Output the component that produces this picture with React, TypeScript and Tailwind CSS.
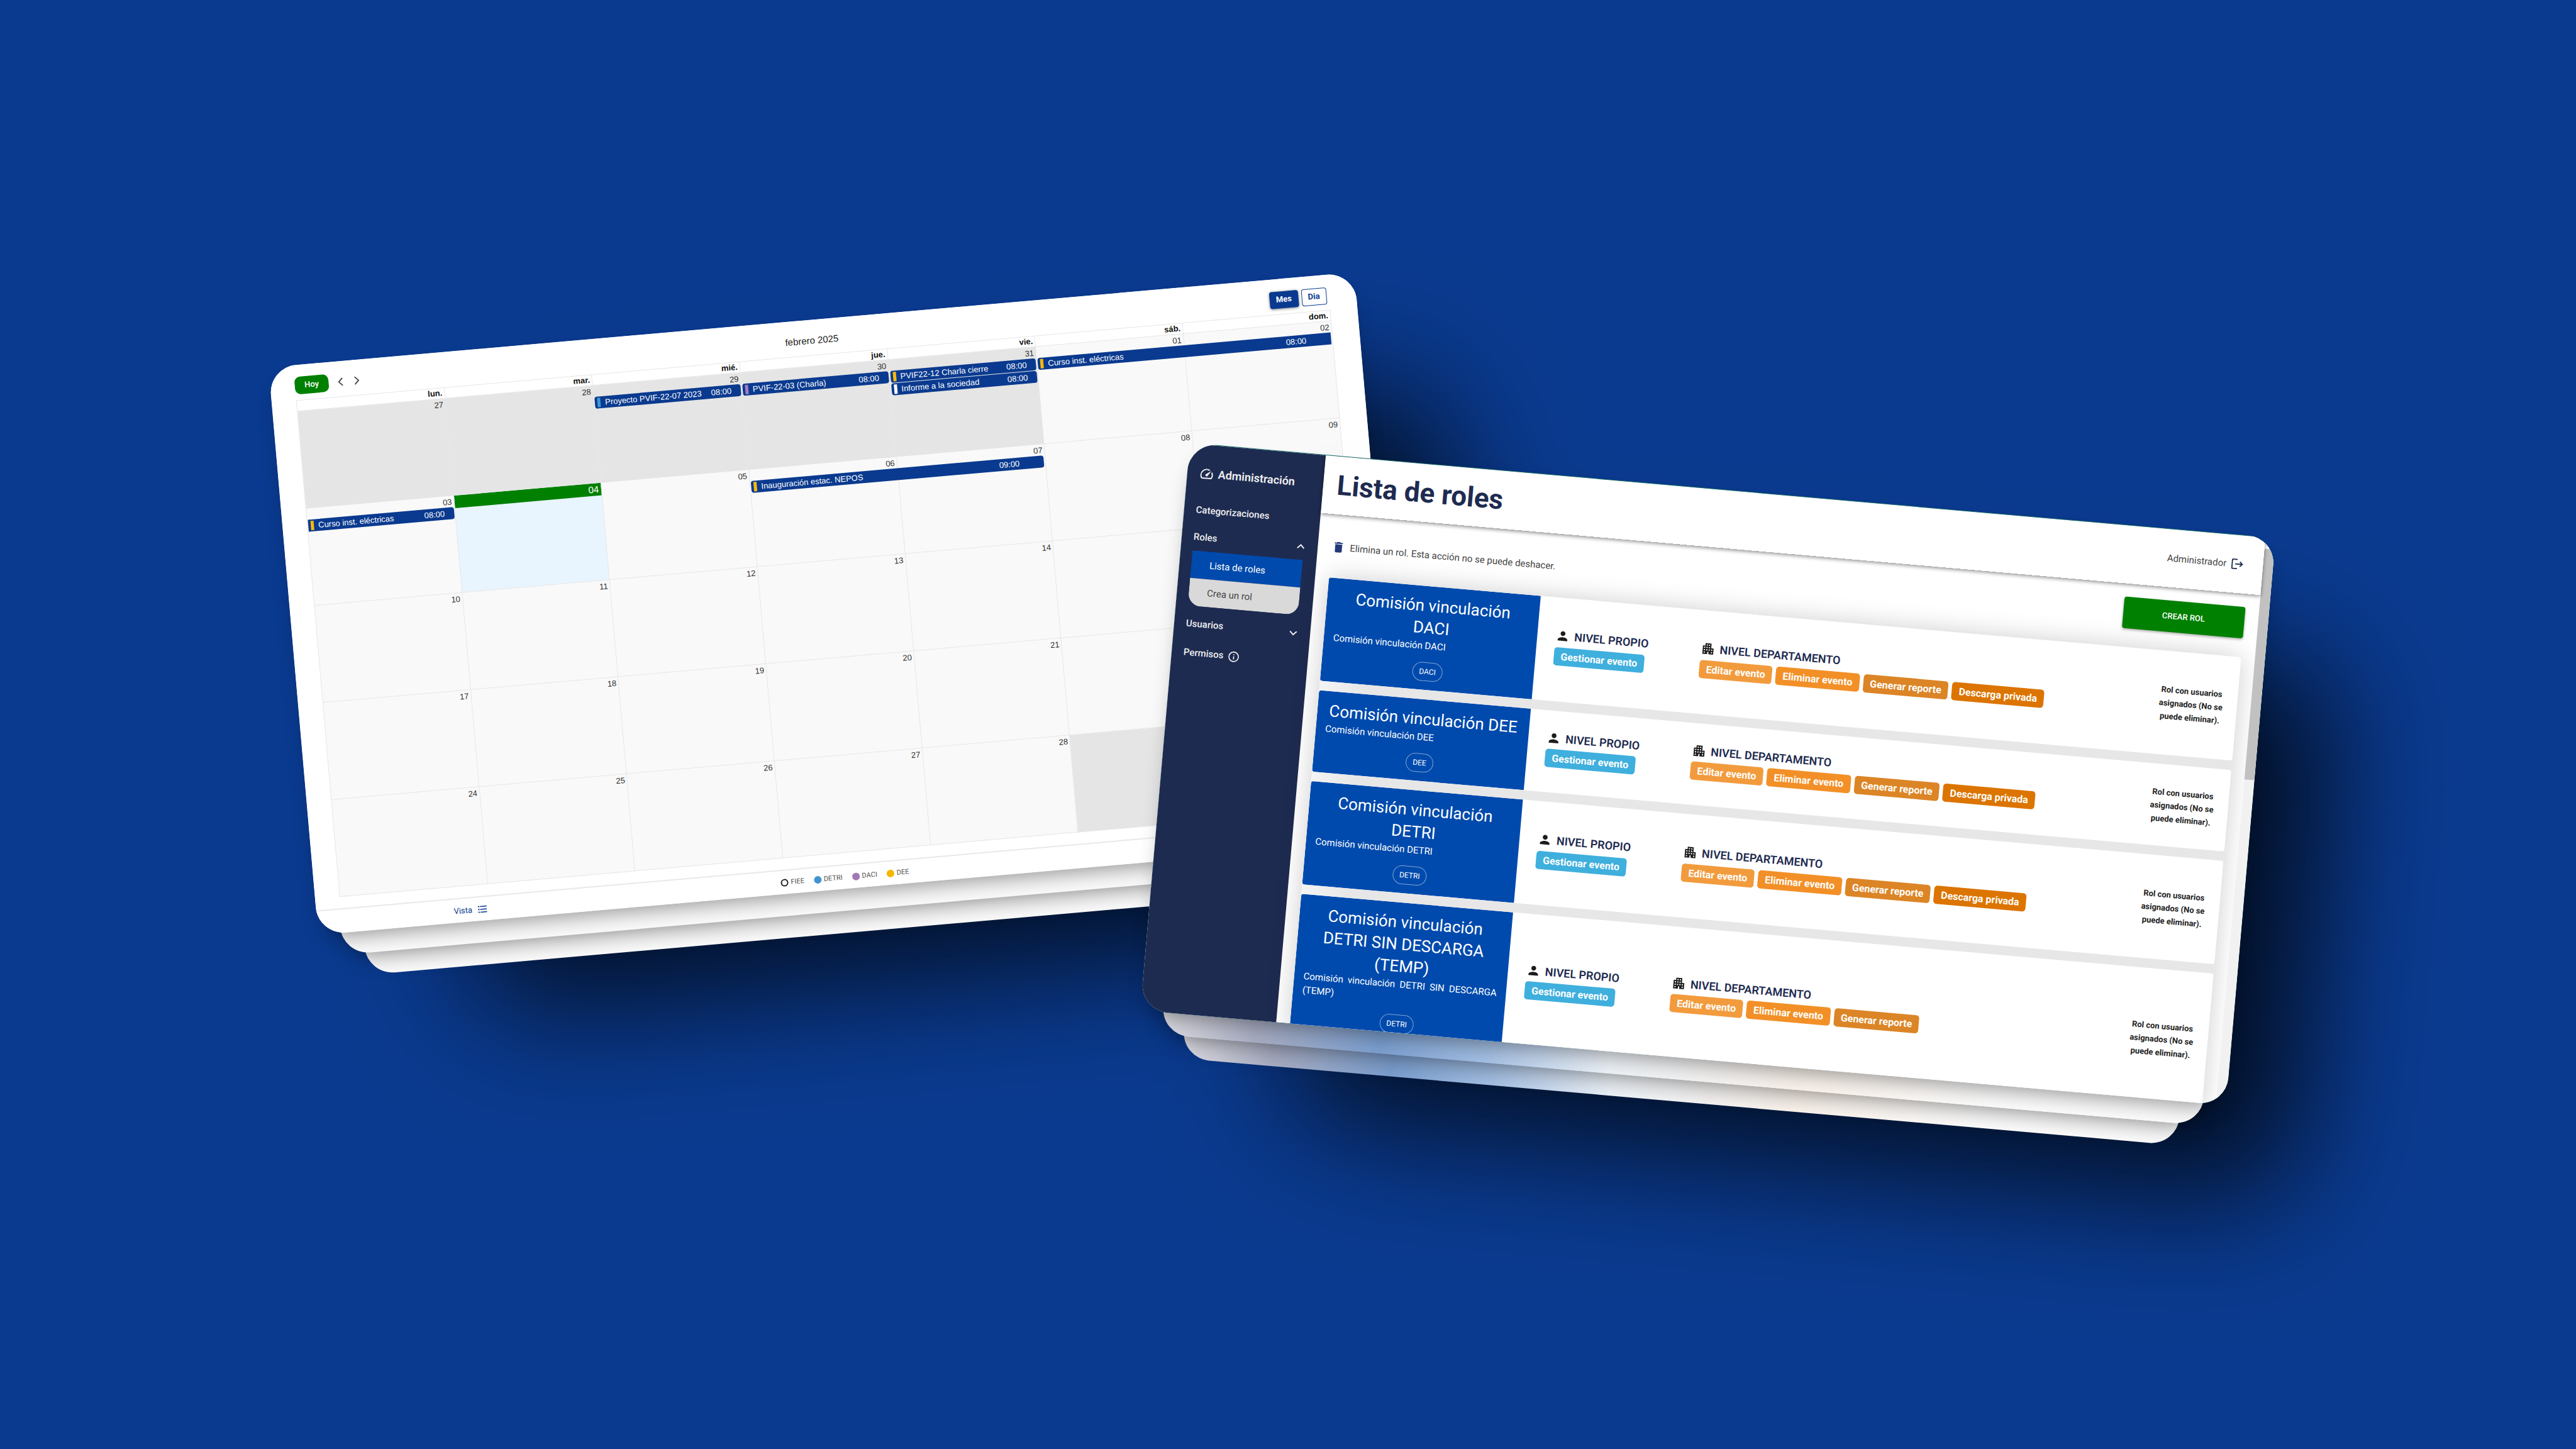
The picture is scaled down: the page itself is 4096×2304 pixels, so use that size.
import type { ReactNode } from "react";
import { ChevronLeft, ChevronRight } from "lucide-react";
import {
  MdApartment,
  MdDelete,
  MdFormatListBulleted,
  MdInfoOutline,
  MdKeyboardArrowDown,
  MdKeyboardArrowUp,
  MdLogout,
  MdPerson,
  MdSpeed,
} from "react-icons/md";

type CalendarEvent = {
  title: string;
  time: string;
  marker: string;
  days?: 1 | 2;
  openLeft?: boolean;
  openRight?: boolean;
};

type Day = {
  label?: string;
  off?: boolean;
  today?: boolean;
  events?: CalendarEvent[];
};

const weekdays = ["lun.", "mar.", "mié.", "jue.", "vie.", "sáb.", "dom."];

const yellow = "bg-[#fbb90a]";

const weeks: Day[][] = [
  [
    { label: "27", off: true },
    { label: "28", off: true },
    {
      label: "29",
      off: true,
      events: [{ title: "Proyecto PVIF-22-07 2023", time: "08:00", marker: "bg-[#4096d8]" }],
    },
    {
      label: "30",
      off: true,
      events: [{ title: "PVIF-22-03 (Charla)", time: "08:00", marker: "bg-[#a77bc0]" }],
    },
    {
      label: "31",
      off: true,
      events: [
        { title: "PVIF22-12 Charla cierre", time: "08:00", marker: yellow },
        { title: "Informe a la sociedad", time: "08:00", marker: "bg-white" },
      ],
    },
    {
      label: "01",
      events: [
        { title: "Curso inst. eléctricas", time: "08:00", marker: yellow, days: 2, openRight: true },
      ],
    },
    { label: "02" },
  ],
  [
    {
      label: "03",
      events: [{ title: "Curso inst. eléctricas", time: "08:00", marker: yellow, openLeft: true }],
    },
    { label: "04", today: true },
    { label: "05" },
    {
      label: "06",
      events: [{ title: "Inauguración estac. NEPOS", time: "09:00", marker: yellow, days: 2 }],
    },
    { label: "07" },
    { label: "08" },
    { label: "09" },
  ],
  [{ label: "10" }, { label: "11" }, { label: "12" }, { label: "13" }, { label: "14" }, {}, {}],
  [{ label: "17" }, { label: "18" }, { label: "19" }, { label: "20" }, { label: "21" }, {}, {}],
  [
    { label: "24" },
    { label: "25" },
    { label: "26" },
    { label: "27" },
    { label: "28" },
    { off: true },
    { off: true },
  ],
];

const legend = [
  { name: "FIEE", dot: "border-2 border-[#222] bg-white" },
  { name: "DETRI", dot: "bg-[#4095d1]" },
  { name: "DACI", dot: "bg-[#a277b5]" },
  { name: "DEE", dot: "bg-[#f7b500]" },
];

function EventBar({ event }: { event: CalendarEvent }) {
  const wide = event.days === 2;
  return (
    <button
      type="button"
      className={`relative z-10 mx-px mb-px flex h-[19px] items-center bg-[#0a3a8f] pl-1 text-left text-white ${
        wide ? "w-[calc(200%-2px)] pr-[39px]" : "w-[calc(100%-2px)] pr-[15px]"
      } ${event.openLeft ? "" : "rounded-l-[4px]"} ${event.openRight ? "" : "rounded-r-[4px]"}`}
    >
      <span className={`mr-[7px] h-[15px] w-[5px] ${event.marker}`} />
      <span className="whitespace-nowrap">{event.title}</span>
      <span className="ml-auto">{event.time}</span>
    </button>
  );
}

function DayCell({ day }: { day: Day }) {
  const tone = day.off ? "bg-[#e5e5e5]" : day.today ? "bg-[#e8f5ff]" : "bg-[#f9f9f9]";
  return (
    <td className={`border border-[#e6e6e6] p-0 align-top ${tone}`}>
      <div
        className={
          day.today
            ? "h-5 bg-[#008000] pr-[4px] text-right text-[15px] leading-5 text-white"
            : "h-[18px] pr-[3px] text-right leading-5 text-[#333]"
        }
      >
        {day.label}
      </div>
      {day.events?.map((event) => (
        <EventBar key={event.title} event={event} />
      ))}
    </td>
  );
}

function CalendarPage() {
  return (
    <div className="flex h-full flex-col bg-white font-['Liberation_Sans',Arial,sans-serif] text-[13px] text-[#222]">
      <div className="grid h-14 grid-cols-3 items-center pt-[10px] pr-[47px] pl-[39px]">
        <div className="flex items-center">
          <button
            type="button"
            className="h-7 w-[54px] rounded-[9px] bg-[#008000] font-['Roboto',sans-serif] font-medium text-white"
          >
            Hoy
          </button>
          <button type="button" aria-label="Mes anterior" className="ml-2 text-[#444]">
            <ChevronLeft className="size-[22px]" strokeWidth={2} />
          </button>
          <button type="button" aria-label="Mes siguiente" className="ml-1 text-[#444]">
            <ChevronRight className="size-[22px]" strokeWidth={2} />
          </button>
        </div>
        <h2 className="pl-1 text-center text-[15px]">febrero 2025</h2>
        <div className="flex justify-end gap-[5px] font-['Roboto',sans-serif] font-bold">
          <button
            type="button"
            className="h-[27px] w-[46px] rounded-[4px] bg-[#0a3a8f] text-white shadow-[0_1px_4px_rgba(0,0,0,0.5)]"
          >
            Mes
          </button>
          <button
            type="button"
            className="h-[27px] w-10 rounded-[4px] border border-[#0a3a8f] bg-white text-[#0a3a8f]"
          >
            Dia
          </button>
        </div>
      </div>
      <div className="pr-[43px] pl-[39px]">
        <table className="w-full table-fixed border-collapse">
          <thead>
            <tr>
              {weekdays.map((name) => (
                <th
                  key={name}
                  scope="col"
                  className="h-4 border border-[#e6e6e6] py-0 pr-[3px] pl-0 text-right leading-4 font-bold text-[#111]"
                >
                  {name}
                </th>
              ))}
            </tr>
          </thead>
          <tbody>
            {weeks.map((week) => (
              <tr key={week[0].label} className="h-[155px]">
                {week.map((day, index) => (
                  <DayCell key={weekdays[index]} day={day} />
                ))}
              </tr>
            ))}
          </tbody>
        </table>
      </div>
      <footer className="mt-auto flex h-[39px] items-center border-t-2 border-[#e9e9e9] pl-[218px] font-['Roboto',sans-serif]">
        <button type="button" className="flex w-[522px] items-center gap-2 text-[#0a3a8f]">
          Vista
          <MdFormatListBulleted className="size-[18px]" />
        </button>
        <ul className="flex gap-[15px] text-[11px] text-[#555]">
          {legend.map((item) => (
            <li key={item.name} className="flex items-center gap-1">
              <span className={`size-3 rounded-full ${item.dot}`} />
              {item.name}
            </li>
          ))}
        </ul>
      </footer>
    </div>
  );
}

type Role = {
  name: string;
  description: string;
  department: string;
  privateDownload: boolean;
};

const roles: Role[] = [
  {
    name: "Comisión vinculación DACI",
    description: "Comisión vinculación DACI",
    department: "DACI",
    privateDownload: true,
  },
  {
    name: "Comisión vinculación DEE",
    description: "Comisión vinculación DEE",
    department: "DEE",
    privateDownload: true,
  },
  {
    name: "Comisión vinculación DETRI",
    description: "Comisión vinculación DETRI",
    department: "DETRI",
    privateDownload: true,
  },
  {
    name: "Comisión vinculación DETRI SIN DESCARGA (TEMP)",
    description: "Comisión vinculación DETRI SIN DESCARGA (TEMP)",
    department: "DETRI",
    privateDownload: false,
  },
];

function Badge({ tone, children }: { tone: string; children: ReactNode }) {
  return (
    <span
      className={`h-[29px] rounded-[5px] px-[11px] text-[16px] leading-[29px] font-bold whitespace-nowrap text-white ${tone}`}
    >
      {children}
    </span>
  );
}

function Level({
  icon,
  title,
  className,
  children,
}: {
  icon: ReactNode;
  title: string;
  className: string;
  children: ReactNode;
}) {
  return (
    <div className={className}>
      <h3 className="flex h-7 items-center gap-[7px] text-[18px] font-semibold whitespace-nowrap text-[#1e2b50]">
        <span className="text-[#1c1c1c]">{icon}</span>
        {title}
      </h3>
      <div className="mt-[4px] mb-[11px] flex gap-[6px]">{children}</div>
    </div>
  );
}

function RoleCard({ role }: { role: Role }) {
  return (
    <li className="flex items-center overflow-hidden rounded-[4px] bg-white">
      <div className="flex w-[338px] shrink-0 flex-col items-center self-stretch bg-[#004aad] px-[15px] py-[14px] text-white">
        <h2 className="text-center text-[26px] leading-[35px]">{role.name}</h2>
        <p className="w-full text-justify leading-[22px]">{role.description}</p>
        <span className="mt-[15px] h-[30px] rounded-full border border-white/50 px-[10px] text-[12px] leading-7">
          {role.department}
        </span>
      </div>
      <Level
        className="ml-[29px] w-[232px] shrink-0"
        title="NIVEL PROPIO"
        icon={<MdPerson className="size-[23px]" />}
      >
        <Badge tone="bg-[#3fafdd]">Gestionar evento</Badge>
      </Level>
      <Level
        className="flex-1"
        title="NIVEL DEPARTAMENTO"
        icon={<MdApartment className="size-[23px]" />}
      >
        <Badge tone="bg-[#f29b3d]">Editar evento</Badge>
        <Badge tone="bg-[#f29027]">Eliminar evento</Badge>
        <Badge tone="bg-[#dc8526]">Generar reporte</Badge>
        {role.privateDownload && <Badge tone="bg-[#dc7400]">Descarga privada</Badge>}
      </Level>
      <p className="mr-[18px] w-[110px] text-center text-[13px] leading-[21px] font-bold text-[#222]">
        Rol con usuarios asignados (No se puede eliminar).
      </p>
    </li>
  );
}

function Sidebar() {
  return (
    <aside className="w-[217px] shrink-0 bg-[#1e2b50] pr-[22px] pl-[19px] font-medium text-[#f0f0f0]">
      <div className="flex h-[83px] items-center gap-[6px] pt-2 text-[18px] font-semibold">
        <MdSpeed className="size-6" />
        Administración
      </div>
      <nav>
        <a href="#categorizaciones" className="flex h-[43px] items-center">
          Categorizaciones
        </a>
        <div className="-mr-[7px]">
          <button type="button" className="flex h-[43px] w-full items-center justify-between">
            Roles
            <MdKeyboardArrowUp className="size-6" />
          </button>
        </div>
        <div className="mb-[7px] overflow-hidden rounded-b-[20px] font-normal">
          <a href="#lista" className="flex h-11 items-center bg-[#004aad] pl-[29px] text-white">
            Lista de roles
          </a>
          <a href="#crear" className="flex h-11 items-center bg-[#d9d9d9] pl-[29px] text-[#444]">
            Crea un rol
          </a>
        </div>
        <div className="-mr-[7px]">
          <button type="button" className="flex h-[43px] w-full items-center justify-between">
            Usuarios
            <MdKeyboardArrowDown className="size-6" />
          </button>
        </div>
        <a href="#permisos" className="mt-[3px] flex h-[43px] items-center gap-[6px]">
          Permisos
          <MdInfoOutline className="size-5" />
        </a>
      </nav>
    </aside>
  );
}

function RolesPage() {
  return (
    <div className="flex h-full bg-white font-['Roboto',sans-serif] text-[15px] text-[#444]">
      <Sidebar />
      <main className="flex min-w-0 flex-1 flex-col">
        <header className="relative flex h-[92px] shrink-0 items-center justify-between pr-[30px] pl-[22px] shadow-[0_2px_6px_rgba(0,0,0,0.45)]">
          <h1 className="text-[44px] font-bold text-[#1e2b50]">Lista de roles</h1>
          <div className="flex items-center gap-[6px]">
            Administrador
            <button type="button" aria-label="Cerrar sesión">
              <MdLogout className="size-[22px] text-[#1e2b50]" />
            </button>
          </div>
        </header>
        <div className="min-h-0 flex-1 px-[22px] pt-[21px]">
          <div className="flex items-end justify-between">
            <p className="flex items-center gap-[7px] pb-[8px]">
              <MdDelete className="size-[22px] text-[#23397a]" />
              Elimina un rol. Esta acción no se puede deshacer.
            </p>
            <button
              type="button"
              className="h-[50px] w-[193px] rounded-[4px] bg-[#008000] text-[13px] font-medium text-white shadow-[0_2px_4px_rgba(0,0,0,0.35)]"
            >
              CREAR ROL
            </button>
          </div>
          <ul className="mt-[30px] flex flex-col gap-[15px] rounded-[4px] bg-linear-to-r from-[#f4f4f4] via-[#e7e7e7] via-5% to-[#e7e7e7] shadow-[0_0_40px_rgba(0,0,0,0.2)]">
            {roles.map((role) => (
              <RoleCard key={role.name} role={role} />
            ))}
          </ul>
        </div>
      </main>
      <div className="w-4 shrink-0 bg-[#f1f1f1]">
        <div className="h-[18px] bg-white" />
        <div className="h-[368px] bg-[#c1c1c1]" />
      </div>
    </div>
  );
}

function SheetStack({
  className,
  sheet,
  front,
  children,
}: {
  className: string;
  sheet: string;
  front: string;
  children: ReactNode;
}) {
  return (
    <section className={`absolute aspect-[1732/906] w-[42.3%] origin-top-left ${className}`}>
      <div className="absolute top-[190px] -right-[120px] -bottom-[150px] left-[240px] rounded-[100px] bg-black/75 blur-[100px]" />
      <div
        className={`absolute inset-x-[72px] -bottom-[70px] h-[300px] rounded-b-[44px] ${sheet}`}
      />
      <div
        className={`absolute inset-x-9 -bottom-[35px] h-[300px] rounded-b-[44px] shadow-[0_20px_36px_-16px_rgba(0,0,0,0.45)] ${sheet}`}
      />
      <div
        className={`absolute inset-0 overflow-hidden rounded-[44px] shadow-[0_20px_36px_-16px_rgba(0,0,0,0.45)] ${front}`}
      >
        {children}
      </div>
    </section>
  );
}

export default function App() {
  return (
    <div className="relative min-h-screen w-full overflow-hidden bg-[#0a3a8f]">
      <SheetStack
        className="top-[25.33%] left-[10.42%] -rotate-5"
        sheet="bg-[#fcfcfc]"
        front="bg-white"
      >
        <CalendarPage />
      </SheetStack>
      <SheetStack
        className="top-[30.56%] left-[46.19%] rotate-5"
        sheet="bg-[linear-gradient(90deg,#dcdce2_0%,#a9adc2_9%,#7b9fd0_21%,#a3bfe4_31%,#eef3f8_43%,#fbf3ec_62%,#fdfdfd_80%)]"
        front="bg-[#1d7874] pt-px"
      >
        <RolesPage />
      </SheetStack>
    </div>
  );
}
